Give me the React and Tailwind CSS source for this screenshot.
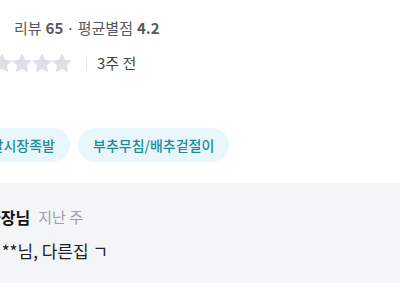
const FONT = "font-['Noto_Sans_CJK_KR','Noto_Sans',sans-serif]";

function Star() {
  return (
    <svg width="20" height="20" viewBox="1.8 1.6 20.4 20.4" className="shrink-0">
      <path
        d="M12 1.8l3.1 6.6 7.2.9-5.3 5 1.4 7.1L12 17.9l-6.4 3.5 1.4-7.1-5.3-5 7.2-.9z"
        fill="#dde0e5"
      />
    </svg>
  );
}

export default function App() {
  return (
    <div className={`${FONT} h-[300px] w-[400px] overflow-hidden bg-white`}>
      <div className="flex h-[56px] items-center pl-[14px] pt-[1px] text-[15px] text-[#555a60]">
        리뷰 <span className="ml-1 font-bold">65</span>
        <span className="mx-[3px]">·</span>
        평균별점 <span className="ml-1 font-bold">4.2</span>
      </div>

      <div className="-ml-[28px] flex h-[14px] items-center">
        <div className="flex">
          <Star />
          <Star />
          <Star />
          <Star />
          <Star />
        </div>
        <span className="ml-[14px] h-[16px] w-px bg-[#e6e8eb]" />
        <span className="ml-[10px] text-[15px] text-[#444]">3주 전</span>
      </div>

      <div className="mt-[58px] flex h-[34px] items-stretch gap-[8px]">
        <div className="-ml-[40px] flex w-[110px] items-center justify-end rounded-full bg-[#e9f7fc] pr-[15px] text-[14px] font-medium text-[#1d8a9b]">
          발시장족발
        </div>
        <div className="flex items-center rounded-full bg-[#e9f7fc] px-[15px] text-[14px] font-medium text-[#1d8a9b]">
          부추무침/배추겉절이
        </div>
      </div>

      <div className="mt-[21px] h-[100px] bg-[#f4f5f7] pt-[22px]">
        <div className="-ml-[14px] flex items-center gap-[8px]">
          <span className="text-[16px] font-bold text-[#111]">사장님</span>
          <span className="text-[15px] text-[#9a9ea5]">지난 주</span>
        </div>
        <p className="-ml-[14px] mt-[9px] text-[17px] text-[#222]">김**님, 다른집 ㄱ</p>
      </div>
    </div>
  );
}
